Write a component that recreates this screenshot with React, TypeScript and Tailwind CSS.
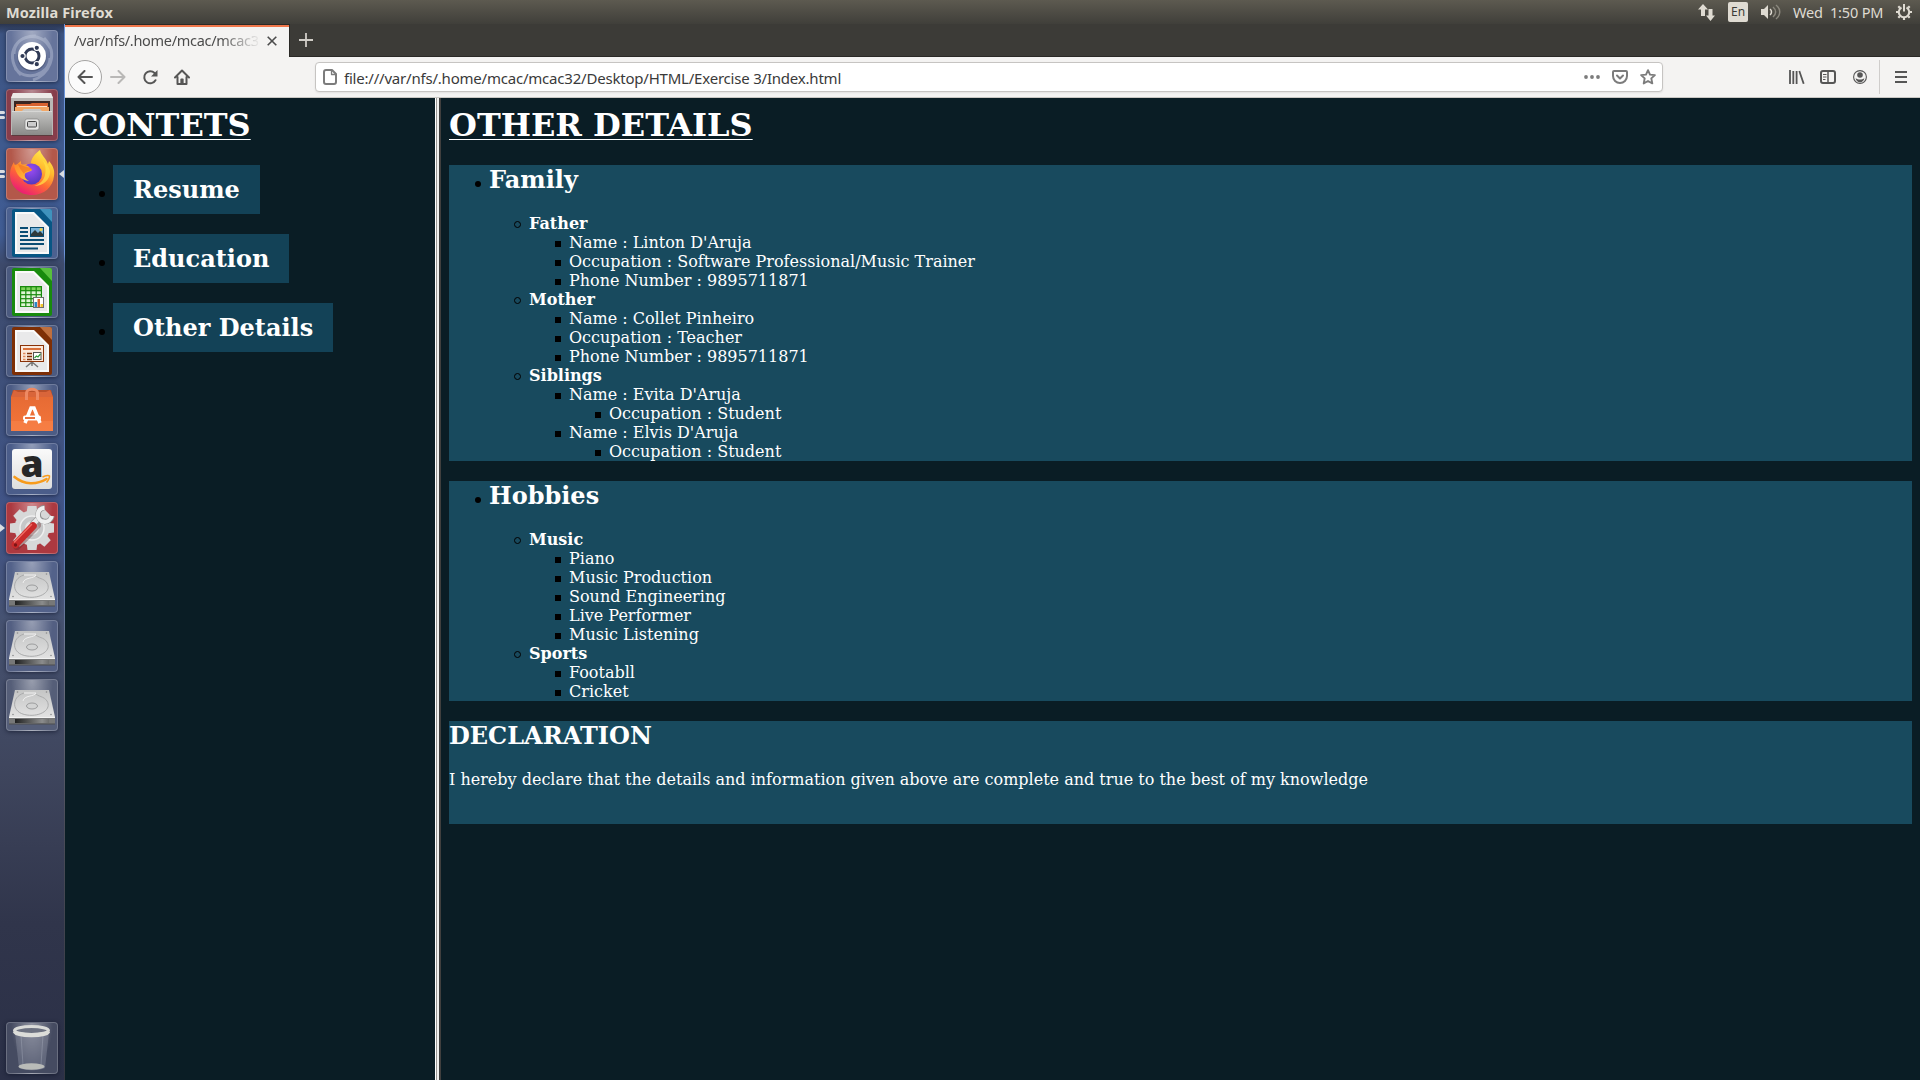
import React from "react";

type Kind = "disc" | "circle" | "square";
type Tree = { text: string; bold?: boolean; children?: Tree[] };

const family: Tree[] = [
  {
    text: "Father",
    bold: true,
    children: [
      { text: "Name : Linton D'Aruja" },
      { text: "Occupation : Software Professional/Music Trainer" },
      { text: "Phone Number : 9895711871" },
    ],
  },
  {
    text: "Mother",
    bold: true,
    children: [
      { text: "Name : Collet Pinheiro" },
      { text: "Occupation : Teacher" },
      { text: "Phone Number : 9895711871" },
    ],
  },
  {
    text: "Siblings",
    bold: true,
    children: [
      { text: "Name : Evita D'Aruja", children: [{ text: "Occupation : Student" }] },
      { text: "Name : Elvis D'Aruja", children: [{ text: "Occupation : Student" }] },
    ],
  },
];

const hobbies: Tree[] = [
  {
    text: "Music",
    bold: true,
    children: [
      { text: "Piano" },
      { text: "Music Production" },
      { text: "Sound Engineering" },
      { text: "Live Performer" },
      { text: "Music Listening" },
    ],
  },
  { text: "Sports", bold: true, children: [{ text: "Footabll" }, { text: "Cricket" }] },
];

function Marker({ kind }: { kind: Kind }) {
  if (kind === "circle")
    return <span className="-ml-[15px] mt-[2px] mr-2 size-[7px] shrink-0 rounded-full border border-black" />;
  return <span className="-ml-[14px] mt-[3px] mr-2 size-[6px] shrink-0 bg-black" />;
}

function List({ items, kind }: { items: Tree[]; kind: Kind }) {
  return (
    <ul className="pl-10">
      {items.map((item, i) => (
        <li key={i}>
          <div className="flex h-[19px] items-center whitespace-nowrap">
            <Marker kind={kind} />
            <span className={item.bold ? "font-bold" : ""}>{item.text}</span>
          </div>
          {item.children && <List items={item.children} kind="square" />}
        </li>
      ))}
    </ul>
  );
}

function Section({ title, items }: { title: string; items: Tree[] }) {
  return (
    <section className="mb-5 bg-[#184a5e] pl-10">
      <div className="mb-5 flex h-[29px] items-center">
        <span className="-ml-[14px] mt-[8px] mr-2 size-[6px] shrink-0 rounded-full bg-black" />
        <h2 className="text-2xl leading-[29px] font-bold">{title}</h2>
      </div>
      <List items={items} kind="circle" />
    </section>
  );
}

/* ---------- Launcher icons (52x52 tiles) ---------- */

function DashIcon() {
  return (
    <svg viewBox="0 0 52 52" className="size-full">
      <g fill="none" stroke="#c9d0e2" strokeOpacity=".4" strokeWidth="3">
        <path d="M8 24C8 4 36 0 44 18M44 28C44 46 18 52 9 38M15 45C-2 28 8 5 30 6M38 8C54 24 42 46 27 50" />
      </g>
      <circle cx="26" cy="27" r="14.5" fill="#2a3350" opacity=".35" />
      <circle cx="26" cy="26" r="14" fill="#fff" />
      <circle cx="26" cy="26" r="7" fill="none" stroke="#303a55" strokeWidth="3" />
      <g stroke="#fff" strokeWidth="1.2" fill="#303a55">
        <circle cx="16.5" cy="26" r="2.7" />
        <circle cx="30.8" cy="17.8" r="2.7" />
        <circle cx="30.8" cy="34.2" r="2.7" />
      </g>
    </svg>
  );
}

function FilesIcon() {
  return (
    <svg viewBox="0 0 52 52" className="size-full">
      <defs>
        <linearGradient id="cab" x1="0" y1="0" x2="0" y2="1">
          <stop offset="0" stopColor="#c9c9c7" />
          <stop offset="1" stopColor="#8a8a88" />
        </linearGradient>
      </defs>
      <path d="M7 4h38l2 5v37H5V9z" fill="#b9b7b5" />
      <path d="M7 4h38l2 5H5z" fill="#eceae8" />
      <path d="M8 12h36v12H8z" fill="#3a2622" />
      <path d="M10 15h14l2-1h16v7H10z" fill="#d9622f" />
      <path d="M9 18h34v5H9z" fill="#f3a765" />
      <path d="M11 17.5h30" stroke="#fbe3cc" />
      <path d="M6 22h10l2-2h16l2 2h10v24H6z" fill="url(#cab)" />
      <path d="M6 22.500h40" stroke="#e0e0de" strokeWidth=".7" />
      <rect x="19" y="30" width="14" height="11" rx="2" fill="#e6e6e4" stroke="#777" strokeWidth=".6" />
      <rect x="21.500" y="32.500" width="9" height="5.500" rx="1" fill="#ccc" stroke="#444" />
      <path d="M6 46.500h40" stroke="#5c3a3c" />
    </svg>
  );
}

function FirefoxIcon() {
  return (
    <svg viewBox="0 0 52 52" className="size-full">
      <defs>
        <linearGradient id="fxBody" x1=".8" y1="0" x2=".25" y2="1">
          <stop offset="0" stopColor="#fff04f" />
          <stop offset=".35" stopColor="#ffb92e" />
          <stop offset=".62" stopColor="#ff6a33" />
          <stop offset="1" stopColor="#e9147c" />
        </linearGradient>
        <radialGradient id="fxGlobe" cx=".45" cy=".3" r=".8">
          <stop offset="0" stopColor="#9b4cf4" />
          <stop offset="1" stopColor="#4a35b5" />
        </radialGradient>
        <linearGradient id="fxHead" x1="0" y1="0" x2="1" y2="1">
          <stop offset="0" stopColor="#ff8a2a" />
          <stop offset="1" stopColor="#ffc43a" />
        </linearGradient>
      </defs>
      <path
        d="M26 47C13 47 4 38 4 26c0-5 2-9 4-12 0 2 1 3 2 4 2-3 4-4 5-5 0 2 0 3 1 4 3-1 7-1 9 1C24 10 30 5 34 2c1 5 6 8 8 14l1-3c4 5 6 9 5 15C47 39 38 47 26 47z"
        fill="url(#fxBody)"
      />
      <circle cx="25.500" cy="26" r="10.500" fill="url(#fxGlobe)" />
      <path d="M33 8c5 5 8 11 6 19-1 5-5 9-11 11 9 0 16-6 16-14 0-7-7-10-11-16z" fill="#ffdf45" opacity=".75" />
      <path d="M8 17c4-1 9-1 14 1l4 4c-2 2-6 2-7 4-1 3 1 5 4 7-8-1-13-6-15-16z" fill="url(#fxHead)" />
      <path d="M12 16c5 2 9 3 13 4l1 2c-3 1-7 1-8 4-2-3-5-6-6-10z" fill="#f06a20" opacity=".55" />
    </svg>
  );
}

function OfficeDoc({ dark, light, children }: { dark: string; light: string; children: React.ReactNode }) {
  return (
    <svg viewBox="0 0 52 52" className="size-full">
      <rect x="6" y="2" width="40" height="48" rx="2" fill={dark} />
      <path d="M34 2h10a2 2 0 0 1 2 2v11z" fill={light} />
      <path d="M9 5h19l15 15v27H9z" fill="#fafafa" />
      <path d="M11 7h16l14 14v24H11z" fill="#e9e9ea" />
      {children}
    </svg>
  );
}

function WriterIcon() {
  return (
    <OfficeDoc dark="#085684" light="#3f92bd">
      <g stroke="#0a4c73" strokeWidth="2">
        <path d="M14 21h8M14 25h8M14 29h8M14 33h24M14 37h24M14 41.500h18" />
      </g>
      <rect x="24.500" y="20.500" width="13" height="9" fill="#7bb3d8" stroke="#0a4c73" />
      <path d="M25 29v-2l4-4 3 3 2-2 3 3v2z" fill="#2f3a3c" />
      <circle cx="35" cy="22.500" r="1.500" fill="#f4d24a" />
    </OfficeDoc>
  );
}

function CalcIcon() {
  return (
    <OfficeDoc dark="#188a0d" light="#57bf3c">
      <rect x="14" y="20" width="22" height="21" fill="#188a0d" />
      {[21.3, 25.3, 29.3, 33.3, 37.3].map((y) =>
        [15.2, 20.4, 25.6, 30.8].map((x) => (
          <rect key={`${x}-${y}`} x={x} y={y} width="4" height="2.800" fill={y < 24 ? "#7fd35c" : "#dff5d4"} />
        )),
      )}
      <rect x="27.500" y="31.500" width="10" height="10" fill="#fff" stroke="#6d6d6d" />
      <path d="M28.500 36h2.500v5h-2.500z" fill="#2a86c6" />
      <path d="M31.500 33h2.500v8h-2.500z" fill="#d9602a" />
      <path d="M34.500 38h2.500v3h-2.500z" fill="#f0c52b" />
    </OfficeDoc>
  );
}

function ImpressIcon() {
  return (
    <OfficeDoc dark="#7e2f06" light="#bf6f3e">
      <path d="M26 37l-6 5M26 37l6 5M26 37v4" stroke="#777" strokeWidth="1.500" />
      <rect x="14.500" y="20.500" width="23" height="16" fill="#fbe9dc" stroke="#8a3208" />
      <path d="M17 24h18" stroke="#d9703a" strokeWidth="2" />
      <path d="M17 28.500h2.500M17 31.500h2.500M17 34.500h2.500" stroke="#e08a5c" strokeWidth="1.500" />
      <path d="M21 28.500h5M21 31.500h5M21 34.500h5" stroke="#7e2f06" strokeWidth="1.500" />
      <rect x="27.500" y="27.500" width="7.500" height="7" fill="#fff" stroke="#555" />
      <path d="M28.500 33l2-2 1.500 1 2.500-3" stroke="#2f9a3a" fill="none" strokeWidth="1.200" />
    </OfficeDoc>
  );
}

function SoftwareIcon() {
  return (
    <svg viewBox="0 0 52 52" className="size-full">
      <defs>
        <linearGradient id="bag" x1="0" y1="0" x2="0" y2="1">
          <stop offset="0" stopColor="#e66b34" />
          <stop offset="1" stopColor="#f4753a" />
        </linearGradient>
      </defs>
      <path d="M7 6h38l2 7H5z" fill="#b9502a" />
      <path d="M12 8h28l4-2 3 7H5l3-7z" fill="#d9653a" />
      <path d="M5 13h42v34H5z" fill="url(#bag)" />
      <path d="M5 37h42v10H5z" fill="#f8834b" opacity=".6" />
      <path d="M20.500 16V9c0-5 11-5 11 0v7" fill="none" stroke="#ee8a63" strokeWidth="3" />
      <path d="M19 39l6-15h3l6 15" fill="none" stroke="#fff" strokeWidth="3.500" />
      <rect x="17" y="31.500" width="18" height="5" rx="2" fill="#fff" />
      <path d="M19 34h10" stroke="#e8622c" strokeWidth="1.800" />
    </svg>
  );
}

function AmazonIcon() {
  return (
    <div className="relative m-auto size-[40px] rounded-[3px] bg-gradient-to-b from-[#fafafa] to-[#dedede]">
      <span className="absolute inset-x-0 top-[-6px] text-center font-['Open_Sans',sans-serif] text-[37px] leading-10 font-extrabold text-[#272727]">
        a
      </span>
      <svg viewBox="0 0 40 40" className="absolute inset-0">
        <path d="M2.500 28c10 8 22 8 32 2" fill="none" stroke="#f79b1c" strokeWidth="2.600" strokeLinecap="round" />
        <path d="M30.500 28c4-2 7-1.500 7-1 .3 1-1 4.500-3 6.500" fill="none" stroke="#f79b1c" strokeWidth="1.500" />
      </svg>
    </div>
  );
}

function SettingsIcon() {
  const teeth = [0, 45, 90, 135, 180, 225, 270, 315];
  return (
    <svg viewBox="0 0 52 52" className="size-full">
      <g fill="#d7d8d8">
        {teeth.map((a) => (
          <path key={a} d="M20.500 12l1-8h9l1 8z" transform={`rotate(${a} 26 26)`} />
        ))}
        <circle cx="26" cy="26" r="17.500" />
      </g>
      <circle cx="26" cy="26" r="12" fill="#c6c7c8" stroke="#efefef" strokeWidth="1.500" />
      <circle cx="26" cy="26" r="7" fill="#e3e3e3" />
      <path d="M11 44L31 23" stroke="#5e1a1c" strokeWidth="8" strokeLinecap="round" opacity=".35" />
      <path d="M26 23l9-9" stroke="#9b9c9c" strokeWidth="6.500" />
      <path d="M26 23l9-9" stroke="#e9eaea" strokeWidth="5" />
      <path d="M38.500 5.500A7 7 0 1 0 46 14" fill="none" stroke="#8d8e8e" strokeWidth="5.500" />
      <path d="M38.500 5.800A7 7 0 1 0 45.700 14" fill="none" stroke="#eff0f0" strokeWidth="4.300" />
      <path d="M9.500 42.500L27 24" stroke="#c92b2b" strokeWidth="7.500" strokeLinecap="round" />
      <path d="M8.500 40L25.500 22.500" stroke="#ef6c64" strokeWidth="1.500" strokeLinecap="round" />
      <circle cx="9.500" cy="43" r="1.700" fill="#7d1516" />
    </svg>
  );
}

function DriveIcon() {
  return (
    <svg viewBox="0 0 52 52" className="size-full">
      <defs>
        <linearGradient id="plate" x1="0" y1="0" x2="0" y2="1">
          <stop offset="0" stopColor="#c4c5c5" />
          <stop offset="1" stopColor="#e2e2e2" />
        </linearGradient>
        <linearGradient id="front" x1="0" y1="0" x2="1" y2="0">
          <stop offset="0" stopColor="#1f2020" />
          <stop offset=".8" stopColor="#8b8c8c" />
          <stop offset="1" stopColor="#6b6c6c" />
        </linearGradient>
      </defs>
      <path d="M9 11h34l6 27H3z" fill="url(#plate)" />
      <path d="M18 14c-13 4-13 20 3 22 14 2 25-6 20-14-3-5-9-4-12-8" fill="none" stroke="#aaabac" />
      <path d="M18 14h12c-2 4-12 2-13 8" fill="none" stroke="#f0f0f0" />
      <ellipse cx="26" cy="27" rx="5.500" ry="3" fill="#d2d3d3" stroke="#9c9d9e" />
      <g fill="#8a8b8c">
        <circle cx="11.500" cy="13" r=".8" />
        <circle cx="40.500" cy="13" r=".8" />
        <circle cx="7" cy="35.500" r=".8" />
        <circle cx="45" cy="35.500" r=".8" />
      </g>
      <path d="M3 38h46v7H3z" fill="#777878" />
      <path d="M9 40h34v4H9z" fill="url(#front)" />
      <path d="M3 38.500h46" stroke="#f2f2f2" />
      <path d="M3 45h46" stroke="#4c4d4e" />
    </svg>
  );
}

function TrashIcon() {
  return (
    <svg viewBox="0 0 52 52" className="size-full">
      <path d="M9 11l4 35c5 3 21 3 26 0l4-35z" fill="#8e94a4" opacity=".4" />
      <path d="M15 13l2 30M37 13l-2 30" stroke="#b9bfcc" strokeOpacity=".3" />
      <ellipse cx="25.500" cy="44.500" rx="13" ry="3.300" fill="#b9bbb8" />
      <ellipse cx="25.500" cy="8.500" rx="17" ry="4" fill="#6c7180" stroke="#d9dad7" strokeWidth="3" />
      <path d="M8.500 9.500c3 5 31 5 34 0" fill="none" stroke="#dcddd9" strokeWidth="4" />
    </svg>
  );
}

const launcher = [
  { Icon: DashIcon, tint: "bg-[#66749b]" },
  { Icon: FilesIcon, tint: "bg-[#873d4b]", pips: 2 },
  { Icon: FirefoxIcon, tint: "bg-[#b3584a]", pips: 2, active: true },
  { Icon: WriterIcon, tint: "bg-[#4c6190]" },
  { Icon: CalcIcon, tint: "bg-[#4b5a7f]" },
  { Icon: ImpressIcon, tint: "bg-[#4b5a80]" },
  { Icon: SoftwareIcon, tint: "bg-[#4c5c85]" },
  { Icon: AmazonIcon, tint: "bg-[#4b5d8a]" },
  { Icon: SettingsIcon, tint: "bg-[#ac3940]", pips: 1 },
  { Icon: DriveIcon, tint: "bg-[#53628a]" },
  { Icon: DriveIcon, tint: "bg-[#535f82]" },
  { Icon: DriveIcon, tint: "bg-[#555e78]" },
];

function Tile({ Icon, tint, pips = 0, active = false }: { Icon: React.FC; tint: string; pips?: number; active?: boolean }) {
  return (
    <div className={`relative flex size-[52px] rounded-[4px] shadow-[0_1px_4px_rgba(10,15,35,0.6)] ${tint}`}>
      <div className="absolute inset-0 rounded-[4px] border border-white/20 bg-[radial-gradient(ellipse_at_top,rgba(255,255,255,0.4),transparent_60%)]" />
      <div className="relative flex size-[52px]">
        <Icon />
      </div>
      {pips === 2 && (
        <div className="absolute top-[22px] -left-[6px] flex flex-col gap-[2px]">
          <span className="h-[3px] w-[5px] rounded-r-full bg-[#dadde2]" />
          <span className="h-[3px] w-[5px] rounded-r-full bg-[#dadde2]" />
        </div>
      )}
      {pips === 1 && (
        <svg viewBox="0 0 5 8" className="absolute top-[22px] -left-[6px] h-2 w-[5px]">
          <path d="M0 0l5 4-5 4z" fill="#dadde2" />
        </svg>
      )}
      {active && (
        <svg viewBox="0 0 5 8" className="absolute top-[22px] -right-[6px] h-2 w-[5px]">
          <path d="M5 0L0 4l5 4z" fill="#dadde2" />
        </svg>
      )}
    </div>
  );
}

/* ---------- System bar ---------- */

function TopBar() {
  return (
    <header className="flex h-6 shrink-0 items-center bg-gradient-to-b from-[#5d5a50] to-[#403f3a] pl-[6px] font-['Noto_Sans',sans-serif] text-[#dfdbd2]">
      <span className="w-[110px] text-[14.5px] leading-6 font-bold tracking-[0.12px] whitespace-nowrap">Mozilla Firefox</span>
      <div className="ml-auto flex items-center">
        <svg viewBox="0 0 17 17" className="size-[17px]" fill="#dfdbd2">
          <path d="M5 0l5 5.500H7V12H3V5.500H0zM12.500 17l-4.500-5.500h2.500V5h4v6.500H17z" />
        </svg>
        <span className="ml-[13px] flex size-5 items-center justify-center rounded-[2px] bg-[#dfdbd2] text-[12px] leading-none text-[#3c3b37]">
          En
        </span>
        <svg viewBox="0 0 20 16" className="ml-[13px] h-4 w-5" fill="none" strokeWidth="1.500">
          <path d="M0 5h3l4-4v14l-4-4H0z" fill="#dfdbd2" />
          <path d="M9 5c2 1.500 2 4.500 0 6" stroke="#dfdbd2" />
          <path d="M12 3c3.500 3 3.500 7 0 10M15 1c5 4 5 10 0 14" stroke="#8b887e" />
        </svg>
        <span className="ml-[12px] w-[92px] text-[14.5px] leading-6 tracking-[-0.17px] whitespace-pre">Wed  1:50 PM</span>
        <svg viewBox="0 0 16 16" className="mr-2 ml-[11px] size-4" fill="none" stroke="#dfdbd2">
          <path d="M5.500 3.500a5.200 5.200 0 1 0 5 0" strokeWidth="2" />
          <path d="M8 0v7.500" strokeWidth="2" />
          <path
            d="M0 8h2M14 8h2M8 14v2M2.300 2.300l1.500 1.500M13.700 2.300l-1.500 1.500M2.300 13.700l1.500-1.500M13.700 13.700l-1.500-1.500"
            strokeWidth="2.200"
          />
        </svg>
      </div>
    </header>
  );
}

/* ---------- Browser chrome ---------- */

function TabStrip() {
  return (
    <div className="flex h-[33px] shrink-0 bg-[#3c3b37] shadow-[inset_0_-1px_0_#2a2926]">
      <div className="flex h-[33px] w-[225px] items-center border-t border-r border-[#2a2926] bg-[#f4f3f2] shadow-[inset_0_2px_0_#f0764a]">
        <span className="ml-[9px] w-[187px] font-['Noto_Sans',sans-serif] text-[14.5px] tracking-[-0.3px] whitespace-nowrap text-[#4c4c4c] [mask-image:linear-gradient(to_right,black_78%,transparent)]">
          /var/nfs/.home/mcac/mcac3
        </span>
        <svg viewBox="0 0 10 10" className="ml-[6px] size-[10px]" stroke="#4c4c4c" strokeWidth="1.600">
          <path d="M.700.700l8.600 8.600M9.300.700L.700 9.300" />
        </svg>
      </div>
      <svg viewBox="0 0 14 14" className="mt-[9px] ml-[9px] size-[14px]" stroke="#d0cdc7" strokeWidth="1.800">
        <path d="M7 0v14M0 7h14" />
      </svg>
    </div>
  );
}

function Toolbar() {
  return (
    <div className="flex h-[41px] shrink-0 items-center border-b border-[#c9c7c3] bg-[#f4f3f2] pl-[3px]">
      <div className="flex size-[34px] items-center justify-center rounded-full border border-[#a5a4a3] bg-[#fbfbfb]">
        <svg viewBox="0 0 16 14" className="h-[14px] w-4" fill="none" stroke="#565656" strokeWidth="2" strokeLinecap="round" strokeLinejoin="round">
          <path d="M7.500 1L1.500 7l6 6M2 7h13" />
        </svg>
      </div>
      <svg viewBox="0 0 16 14" className="ml-2 h-[14px] w-4" fill="none" stroke="#b9b8b7" strokeWidth="2" strokeLinecap="round" strokeLinejoin="round">
        <path d="M8.500 1l6 6-6 6M14 7H1" />
      </svg>
      <svg viewBox="0 0 16 16" className="ml-[16px] size-4" fill="none" stroke="#565656" strokeWidth="2">
        <path d="M13.500 11.200A6 6 0 1 1 12.500 4" strokeLinecap="round" />
        <path d="M15.500 1v6.500H9z" fill="#565656" stroke="none" />
      </svg>
      <svg viewBox="0 0 16 16" className="ml-[16px] size-4" fill="none" stroke="#565656" strokeWidth="2" strokeLinecap="round" strokeLinejoin="round">
        <path d="M1 8.500l7-7 7 7M3.500 8v7h9V8" />
        <path d="M6.500 15v-5h3v5z" fill="#565656" stroke="none" />
        <path d="M8 9.500V14" strokeWidth="2.600" strokeLinecap="butt" />
      </svg>
      <div className="ml-[125px] flex h-[30px] w-[1348px] items-center rounded-[4px] border border-[#c6c4c2] bg-white pl-[7px] shadow-[0_1px_2px_rgba(0,0,0,0.08)]">
        <svg viewBox="0 0 14 16" className="h-4 w-[14px]" fill="none" stroke="#7c7c7c" strokeWidth="2" strokeLinejoin="round">
          <path d="M3 1h6l4 4v8a2 2 0 0 1-2 2H3a2 2 0 0 1-2-2V3a2 2 0 0 1 2-2z" />
          <path d="M8.500 1.500V5.500H12.500" strokeWidth="1.300" />
        </svg>
        <span className="mt-[2px] ml-[7px] font-['Noto_Sans',sans-serif] text-[15px] leading-5 tracking-[-0.21px] whitespace-nowrap text-[#3a3a3a]">
          file:///var/nfs/.home/mcac/mcac32/Desktop/HTML/Exercise 3/Index.html
        </span>
        <svg viewBox="0 0 16 4" className="ml-auto h-1 w-4" fill="#7c7c7c">
          <circle cx="2" cy="2" r="1.900" />
          <circle cx="8" cy="2" r="1.900" />
          <circle cx="14" cy="2" r="1.900" />
        </svg>
        <svg viewBox="0 0 16 14" className="ml-3 h-[14px] w-4" fill="none" stroke="#7c7c7c" strokeWidth="2" strokeLinecap="round" strokeLinejoin="round">
          <path d="M2 1h12a1 1 0 0 1 1 1v4a7 7 0 0 1-14 0V2a1 1 0 0 1 1-1z" />
          <path d="M5 5.500l3 3 3-3" />
        </svg>
        <svg viewBox="0 0 16 16" className="mr-[6px] ml-3 size-4" fill="none" stroke="#7c7c7c" strokeWidth="1.900" strokeLinejoin="round">
          <path d="M8 1.200l2 4.400 4.900.5-3.600 3.300 1 5L8 12l-4.300 2.400 1-5L1.100 6.100 6 5.600z" />
        </svg>
      </div>
      <svg viewBox="0 0 16 14" className="ml-[126px] h-[14px] w-4" stroke="#565656" strokeWidth="1.800">
        <path d="M1 0v14M4.300 1v13M7.600 1v13M10.300 1l4.400 12.800" />
      </svg>
      <svg viewBox="0 0 16 14" className="ml-[15px] h-[14px] w-4" fill="none" stroke="#565656" strokeWidth="2">
        <rect x="1" y="1" width="14" height="12" rx="2" />
        <path d="M8 1v12" strokeWidth="1.500" />
        <path d="M3 4.500h3.500M3 7h3.500M3 9.500h2.500" strokeWidth="1" />
      </svg>
      <svg viewBox="0 0 14 14" className="ml-[17px] size-[14px]">
        <circle cx="7" cy="7" r="6.400" fill="none" stroke="#565656" strokeWidth="1.100" />
        <circle cx="7" cy="5" r="2.800" fill="#565656" />
        <path d="M2.600 8.200c2.500 1.800 6.300 1.800 8.800 0-.3 2.300-2 4-4.400 4s-4.100-1.700-4.400-4z" fill="#565656" />
      </svg>
      <span className="ml-3 h-[34px] w-px bg-[#cfcdcb]" />
      <svg viewBox="0 0 12 12" className="ml-[15px] size-3" stroke="#565656" strokeWidth="2">
        <path d="M0 1h12M0 6h12M0 11h12" />
      </svg>
    </div>
  );
}

export default function App() {
  return (
    <div className="flex h-[1080px] w-[1920px] flex-col overflow-hidden bg-[#0a1d25]">
      <TopBar />
      <div className="flex min-h-0 flex-1">
        <nav className="flex w-[64px] shrink-0 flex-col gap-[7px] bg-[linear-gradient(to_bottom,#2a3550_0px,#3d5482_10px,#3f5a8e_120px,#405c94_210px,#3d4a6b_240px,#3f527f_400px,#415488_500px,#465270_600px,#3f465e_740px,#30354b_900px,#2b3047_1056px)] pt-[6px] pb-[6px] pl-[6px]">
          {launcher.map((item, i) => (
            <Tile key={i} {...item} />
          ))}
          <div className="mt-auto">
            <Tile Icon={TrashIcon} tint="bg-[#454b61]" />
          </div>
        </nav>
        <div className="w-px shrink-0 bg-[linear-gradient(to_bottom,#6c94d8_0px,#6c94d8_230px,#4d6596_240px,#5a80c4_500px,#6b7182_640px,#4a4d59_800px,#333640_1056px)]" />
        <div className="flex min-w-0 flex-1 flex-col">
          <TabStrip />
          <Toolbar />
          <div className="flex min-h-0 flex-1 font-['DejaVu_Serif',serif] text-base leading-[19px] text-white">
            <main className="w-[370px] shrink-0 px-2 pt-2">
              <h1 className="mb-[21px] text-[32px] leading-[38px] font-bold underline decoration-1 underline-offset-[3px]">CONTETS</h1>
              <ul className="flex flex-col gap-5 pl-10">
                {["Resume", "Education", "Other Details"].map((label) => (
                  <li key={label} className="flex items-center">
                    <span className="mt-[8px] -ml-[14px] mr-2 size-[6px] shrink-0 rounded-full bg-black" />
                    <h2 className="bg-[#134257] px-5 py-[10px] text-2xl leading-[29px] font-bold whitespace-nowrap">{label}</h2>
                  </li>
                ))}
              </ul>
            </main>
            <div className="flex w-[6px] shrink-0">
              <span className="w-px bg-white" />
              <span className="w-px bg-[#9b9895]" />
              <span className="w-[2px] bg-[#f0efee]" />
              <span className="w-[2px] bg-[#403f3e]" />
            </div>
            <main className="min-w-0 flex-1 px-2 pt-2">
              <h1 className="mb-[21px] text-[32px] leading-[38px] font-bold underline decoration-1 underline-offset-[3px]">
                OTHER DETAILS
              </h1>
              <Section title="Family" items={family} />
              <Section title="Hobbies" items={hobbies} />
              <section className="h-[103px] bg-[#184a5e]">
                <h2 className="mb-5 text-2xl leading-[29px] font-bold">DECLARATION</h2>
                <p>I hereby declare that the details and information given above are complete and true to the best of my knowledge</p>
              </section>
            </main>
          </div>
        </div>
      </div>
    </div>
  );
}
